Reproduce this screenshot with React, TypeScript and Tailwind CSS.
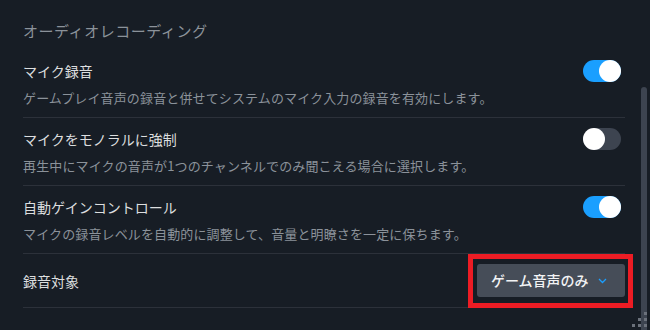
import { useState } from "react";

type Row = {
  title: string;
  desc: string;
  on: boolean;
};

const rows: Row[] = [
  {
    title: "マイク録音",
    desc: "ゲームプレイ音声の録音と併せてシステムのマイク入力の録音を有効にします。",
    on: true,
  },
  {
    title: "マイクをモノラルに強制",
    desc: "再生中にマイクの音声が1つのチャンネルでのみ聞こえる場合に選択します。",
    on: false,
  },
  {
    title: "自動ゲインコントロール",
    desc: "マイクの録音レベルを自動的に調整して、音量と明瞭さを一定に保ちます。",
    on: true,
  },
];

const Toggle = ({ on, onClick }: { on: boolean; onClick: () => void }) => (
  <button
    onClick={onClick}
    className={`relative w-[38px] h-[22px] rounded-full shrink-0 mr-[4px] ${
      on ? "bg-[#1a9fff]" : "bg-[#3d4450]"
    }`}
  >
    <span
      className={`absolute top-0 w-[22px] h-[22px] rounded-full bg-white ${
        on ? "left-[16px]" : "left-0"
      }`}
    />
  </button>
);

export default function App() {
  const [state, setState] = useState(rows.map((r) => r.on));

  return (
    <div
      className="relative flex w-[650px] h-[330px] overflow-hidden bg-[#171d25]"
      style={{ fontFamily: '"Noto Sans CJK JP", "Noto Sans", sans-serif' }}
    >
      <div className="flex-1 pl-[23px] pr-[16px] pt-[22px]">
        <div className="text-[15px] leading-[18px] text-[#8b929a] tracking-[0.55px] mb-[10px]">
          オーディオレコーディング
        </div>

        {rows.map((row, i) => (
          <div key={row.title} className="pt-[12px] pb-[10px] border-b border-[#2c313a]">
            <div className="flex h-[18px] items-center justify-between">
              <span className="text-[14px] leading-[18px] text-[#dcdedf]">{row.title}</span>
              <Toggle
                on={state[i]}
                onClick={() => setState((s) => s.map((v, j) => (j === i ? !v : v)))}
              />
            </div>
            <div className="mt-[9px] text-[13px] leading-[18px] text-[#8b929a] tracking-[0.13px]">
              {row.desc}
            </div>
          </div>
        ))}

        <div className="flex h-[54px] items-center justify-between border-b border-[#2c313a]">
          <span className="text-[14px] leading-[18px] text-[#dcdedf]">録音対象</span>
          <div className="relative">
            <button className="flex items-center w-[148px] h-[33px] rounded-[3px] bg-[#464d58] pl-[14px] pr-[18px] text-[14px] font-medium text-[#f2f3f4]">
              <span className="flex-1 text-left">ゲーム音声のみ</span>
              <svg width="9" height="6" viewBox="0 0 9 6" fill="none">
                <path d="M1 1l3.5 3.5L8 1" stroke="#1a9fff" strokeWidth="1.3" />
              </svg>
            </button>
            <div className="absolute -left-[9px] -right-[8px] -top-[10px] -bottom-[11px] border-[5px] border-[#ed1c24] pointer-events-none" />
          </div>
        </div>
      </div>

      <div className="w-[6px] mr-[3px] pt-[87px]">
        <div className="h-full rounded-t-[3px] bg-[#3d4450]" />
      </div>

      {/* resize grip */}
      <div className="absolute right-[3px] bottom-[3px] grid grid-cols-3 gap-[3px]">
        <span className="w-[3px] h-[3px]" />
        <span className="w-[3px] h-[3px]" />
        <span className="w-[3px] h-[3px] bg-[#6b717b]" />
        <span className="w-[3px] h-[3px]" />
        <span className="w-[3px] h-[3px] bg-[#6b717b]" />
        <span className="w-[3px] h-[3px] bg-[#6b717b]" />
        <span className="w-[3px] h-[3px] bg-[#6b717b]" />
        <span className="w-[3px] h-[3px] bg-[#6b717b]" />
        <span className="w-[3px] h-[3px] bg-[#6b717b]" />
      </div>
    </div>
  );
}
